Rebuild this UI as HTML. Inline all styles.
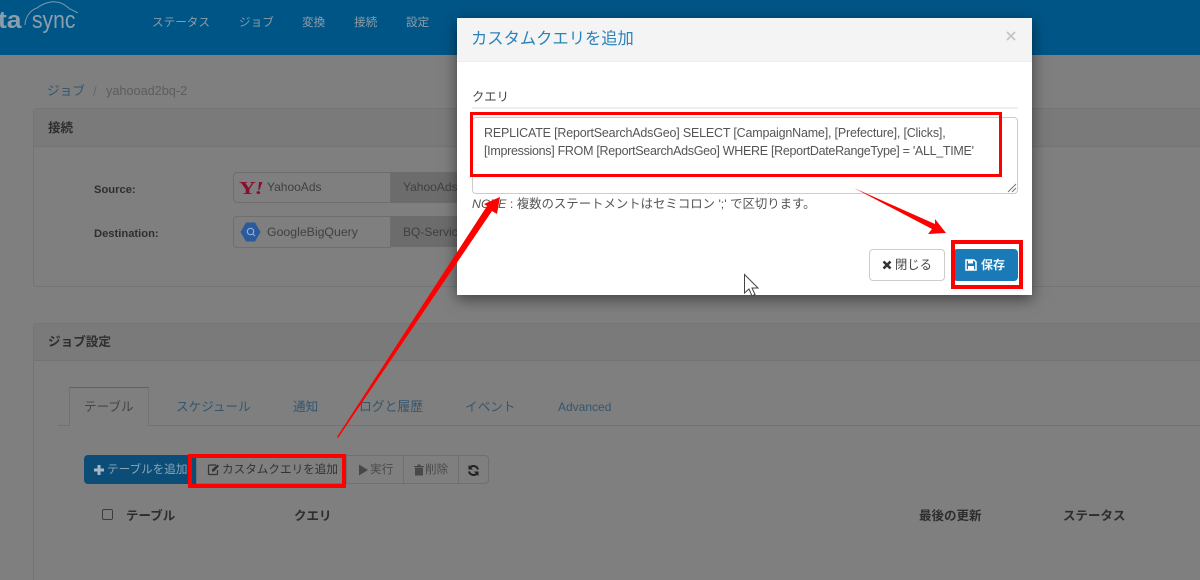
<!DOCTYPE html>
<html lang="ja">
<head>
<meta charset="utf-8">
<title>CData Sync</title>
<style>
html,body{margin:0;padding:0;width:1200px;height:580px;overflow:hidden;background:#7f7f7f;}
#w{width:1200px;height:580px;position:relative;overflow:hidden;background:#7f7f7f;font-family:"Liberation Sans","Noto Sans CJK JP",sans-serif;color:#333;filter:blur(.3px);}
.a{position:absolute;white-space:nowrap;line-height:1;}
.box{position:absolute;box-sizing:border-box;}
.nav{color:#8c9ca8;font-size:11.6px;top:17px;}
.tab{color:#33566f;font-size:12.6px;top:401px;}
.th{color:#2d2d2d;font-size:12.5px;font-weight:bold;top:510px;}
.lbl{color:#2f2f2f;font-size:11.2px;font-weight:bold;}
.grp{color:#404040;font-size:12px;}
.bt{font-size:11.6px;top:464px;}
.red{position:absolute;box-sizing:border-box;border:4px solid #f00;}
</style>
</head>
<body>
<div id="w">
<!-- header -->
<div class="box" style="left:0;top:0;width:1200px;height:55px;background:#005587;"></div>
<div class="a" style="left:-2px;top:9px;font-size:24px;font-weight:bold;color:#8a9fae;transform:scaleX(1.1);transform-origin:0 0;">ta</div>
<div class="a" style="left:32px;top:9px;font-size:24px;color:#8a9fae;transform:scaleX(.88);transform-origin:0 0;">sync</div>
<svg class="box" style="left:0;top:0;" width="90" height="34" viewBox="0 0 90 34"><path d="M25 25C25 18 30 10 37 8 42 4 50 1 56 2 62 2 66 6 70 9L78 13" fill="none" stroke="#7f98aa" stroke-width="1"/></svg>
<div class="a nav" style="left:152px;">ステータス</div>
<div class="a nav" style="left:239px;">ジョブ</div>
<div class="a nav" style="left:302px;">変換</div>
<div class="a nav" style="left:354px;">接続</div>
<div class="a nav" style="left:406px;">設定</div>

<!-- breadcrumb -->
<div class="a" style="left:47px;top:85px;font-size:12.7px;color:#33566f;">ジョブ</div>
<div class="a" style="left:93px;top:85px;font-size:13px;color:#666;">/</div>
<div class="a" style="left:106px;top:85px;font-size:12.7px;color:#5d5d5d;">yahooad2bq-2</div>

<!-- connection panel -->
<div class="box" style="left:33px;top:108px;width:1180px;height:179px;border:1px solid #747474;border-radius:3px;"></div>
<div class="box" style="left:34px;top:109px;width:1178px;height:38px;background:#7a7a7a;border-bottom:1px solid #747474;"></div>
<div class="a" style="left:48px;top:122px;font-size:12.5px;font-weight:bold;color:#2f2f2f;">接続</div>
<div class="a lbl" style="left:94px;top:185px;">Source:</div>
<div class="a lbl" style="left:94px;top:229px;">Destination:</div>

<div class="box" style="left:233px;top:172px;width:158px;height:31px;border:1px solid #6e6e6e;border-radius:4px 0 0 4px;"></div>
<div class="box" style="left:391px;top:172px;width:70px;height:31px;background:#6c6c6c;"></div>
<div class="a" style="left:239px;top:179px;font-family:'Liberation Serif',serif;font-size:18px;font-weight:bold;color:#8a0f2c;letter-spacing:-1px;transform:scaleX(1.3);transform-origin:0 0;">Y<i>!</i></div>
<div class="a grp" style="left:267px;top:181px;">YahooAds</div>
<div class="a grp" style="left:403px;top:181px;">YahooAds</div>

<div class="box" style="left:233px;top:216px;width:158px;height:32px;border:1px solid #6e6e6e;border-radius:4px 0 0 4px;"></div>
<div class="box" style="left:391px;top:216px;width:70px;height:31px;background:#6c6c6c;"></div>
<svg class="box" style="left:240px;top:222px;" width="21" height="20" viewBox="0 0 21 20"><path d="M6 0.5H15L20.5 10 15 19.5H6L0.5 10Z" fill="#2a5a9c"/><circle cx="10.5" cy="9.5" r="3.2" fill="none" stroke="#8fb0d4" stroke-width="1.2"/><path d="M13 12l2 2" stroke="#8fb0d4" stroke-width="1.2"/></svg>
<div class="a grp" style="left:267px;top:226px;font-size:12.3px;">GoogleBigQuery</div>
<div class="a grp" style="left:403px;top:226px;">BQ-Service</div>

<!-- job settings panel -->
<div class="box" style="left:33px;top:323px;width:1180px;height:280px;border:1px solid #747474;border-radius:3px;"></div>
<div class="box" style="left:34px;top:324px;width:1178px;height:37px;background:#7a7a7a;border-bottom:1px solid #747474;"></div>
<div class="a" style="left:48px;top:336px;font-size:12.6px;font-weight:bold;color:#2f2f2f;">ジョブ設定</div>

<!-- tabs -->
<div class="box" style="left:58px;top:425px;width:1142px;height:1px;background:#727272;"></div>
<div class="box" style="left:69px;top:387px;width:80px;height:39px;background:#7f7f7f;border:1px solid #727272;border-top:1px solid #2e6f9c;border-bottom:none;"></div>
<div class="a tab" style="left:84px;color:#444;">テーブル</div>
<div class="a tab" style="left:176px;">スケジュール</div>
<div class="a tab" style="left:293px;">通知</div>
<div class="a tab" style="left:359px;font-size:12.8px;">ログと履歴</div>
<div class="a tab" style="left:465px;">イベント</div>
<div class="a tab" style="left:558px;font-size:12px;">Advanced</div>

<!-- toolbar -->
<div class="box" style="left:84px;top:455px;width:112px;height:29px;background:#0c4d78;border-radius:4px 0 0 4px;"></div>
<svg class="box" style="left:94px;top:465px;" width="10" height="10" viewBox="0 0 10 10"><path d="M3.500 0H6.500V3.500H10V6.500H6.500V10H3.500V6.500H0V3.500H3.500Z" fill="#a6b6c2"/></svg>
<div class="a bt" style="left:107px;color:#8ba5b8;">テーブルを追加</div>
<div class="box" style="left:196px;top:455px;width:293px;height:29px;border:1px solid #6f6f6f;border-radius:0 4px 4px 0;"></div>
<div class="box" style="left:346px;top:455px;width:1px;height:29px;background:#6f6f6f;"></div>
<div class="box" style="left:403px;top:455px;width:1px;height:29px;background:#6f6f6f;"></div>
<div class="box" style="left:458px;top:455px;width:1px;height:29px;background:#6f6f6f;"></div>
<svg class="box" style="left:207px;top:463px;" width="13" height="13" viewBox="0 0 13 13"><path d="M9 2H2.500A1 1 0 0 0 1.500 3V10.500A1 1 0 0 0 2.500 11.500H9.500A1 1 0 0 0 10.500 10.500V7" fill="none" stroke="#333" stroke-width="1.200"/><path d="M5 6.500L10.500 1.500 12 3 7 8.500H5Z" fill="#333"/></svg>
<div class="a bt" style="left:222px;color:#333;">カスタムクエリを追加</div>
<svg class="box" style="left:358px;top:464px;" width="11" height="12" viewBox="0 0 11 12"><path d="M1 0.500L10 6 1 11.500Z" fill="#484848"/></svg>
<div class="a bt" style="left:370px;color:#4a4a4a;">実行</div>
<svg class="box" style="left:414px;top:464px;" width="10" height="12" viewBox="0 0 10 12"><path d="M3.500 0.500H6.500V2H10V3H0V2H3.500ZM1 3.500H9V11.500H1Z" fill="#484848"/></svg>
<div class="a bt" style="left:425px;color:#4a4a4a;">削除</div>
<svg class="box" style="left:467px;top:464px;" width="13" height="13" viewBox="0 0 13 13"><path d="M11 5.500A4.700 4.700 0 0 0 2.800 3.800M2 7.500A4.700 4.700 0 0 0 10.200 9.200" fill="none" stroke="#222" stroke-width="2"/><path d="M1.500 1V5.500H6ZM11.500 12V7.500H7Z" fill="#222"/></svg>

<!-- table head -->
<div class="box" style="left:102px;top:509px;width:11px;height:11px;border:1px solid #3c3c3c;border-radius:2px;"></div>
<div class="a th" style="left:126px;">テーブル</div>
<div class="a th" style="left:294px;">クエリ</div>
<div class="a th" style="left:919px;">最後の更新</div>
<div class="a th" style="left:1063px;">ステータス</div>

<!-- modal -->
<div class="box" style="left:457px;top:18px;width:575px;height:277px;background:#fff;box-shadow:0 4px 14px rgba(0,0,0,.5);"></div>
<div class="box" style="left:457px;top:18px;width:575px;height:44px;background:#f4f4f4;border-bottom:1px solid #eee;"></div>
<div class="a" style="left:471px;top:31px;font-size:16.3px;color:#2a83ba;">カスタムクエリを追加</div>
<svg class="box" style="left:1006px;top:31px;" width="10" height="10" viewBox="0 0 10 10"><path d="M1 1L9 9M9 1L1 9" stroke="#c4c4c4" stroke-width="1.800"/></svg>
<div class="a" style="left:472px;top:91px;font-size:12.3px;color:#444;">クエリ</div>
<div class="box" style="left:472px;top:107px;width:546px;height:2px;background:#eee;"></div>
<div class="box" style="left:472px;top:117px;width:546px;height:77px;border:1px solid #ccc;border-radius:4px;background:#fff;"></div>
<svg class="box" style="left:1007px;top:183px;" width="10" height="10" viewBox="0 0 10 10"><path d="M1 9L9 1M5 9L9 5" stroke="#777" stroke-width="1"/></svg>
<div class="a" style="left:484px;top:127px;font-size:12.5px;color:#555;letter-spacing:-.19px;">REPLICATE [ReportSearchAdsGeo] SELECT [CampaignName], [Prefecture], [Clicks],</div>
<div class="a" style="left:484px;top:145px;font-size:12.5px;color:#555;letter-spacing:-.3px;">[Impressions] FROM [ReportSearchAdsGeo] WHERE [ReportDateRangeType] = 'ALL_TIME'</div>
<div class="a" style="left:472px;top:198px;font-size:12.4px;color:#555;"><i>NOTE</i> : 複数のステートメントはセミコロン ';' で区切ります。</div>

<div class="box" style="left:869px;top:249px;width:76px;height:32px;border:1px solid #ccc;border-radius:4px;background:#fff;"></div>
<svg class="box" style="left:882px;top:260px;" width="10" height="10" viewBox="0 0 10 10"><path d="M1.500 1.500L8.500 8.500M8.500 1.500L1.500 8.500" stroke="#333" stroke-width="2.600"/></svg>
<div class="a" style="left:895px;top:259px;font-size:12.3px;color:#444;">閉じる</div>
<div class="box" style="left:953px;top:249px;width:65px;height:32px;border-radius:4px;background:#1a7ab8;"></div>
<svg class="box" style="left:965px;top:259px;" width="12" height="12" viewBox="0 0 12 12"><path d="M1 1H9L11 3V11H1Z" fill="none" stroke="#fff" stroke-width="1.500"/><path d="M3 1H8V4.500H3ZM3 7H9V11H3Z" fill="#fff"/></svg>
<div class="a" style="left:981px;top:259px;font-size:12px;font-weight:bold;color:#eef6fb;">保存</div>

<!-- cursor -->
<svg class="box" style="left:743px;top:273px;" width="18" height="26" viewBox="0 0 18 26"><path d="M1.500 1.500V20L6 16 9 23 12 21.500 9 15H15Z" fill="#fff" stroke="#444" stroke-width="1"/></svg>

<!-- annotations -->
<div class="red" style="left:470px;top:112px;width:532px;height:65px;border-width:3.500px;"></div>
<div class="red" style="left:951px;top:240px;width:72px;height:49px;"></div>
<div class="red" style="left:188px;top:454px;width:158px;height:34px;"></div>
<svg class="box" style="left:0;top:0;" width="1200" height="580" viewBox="0 0 1200 580">
<path d="M337 437L487 206 484 204 500 197 497 214 492 211 338 438Z" fill="#f00"/>
<path d="M854 188L935 224 935 219 946 233 928 234 932 229Z" fill="#f00"/>
</svg>
</div>
</body>
</html>
